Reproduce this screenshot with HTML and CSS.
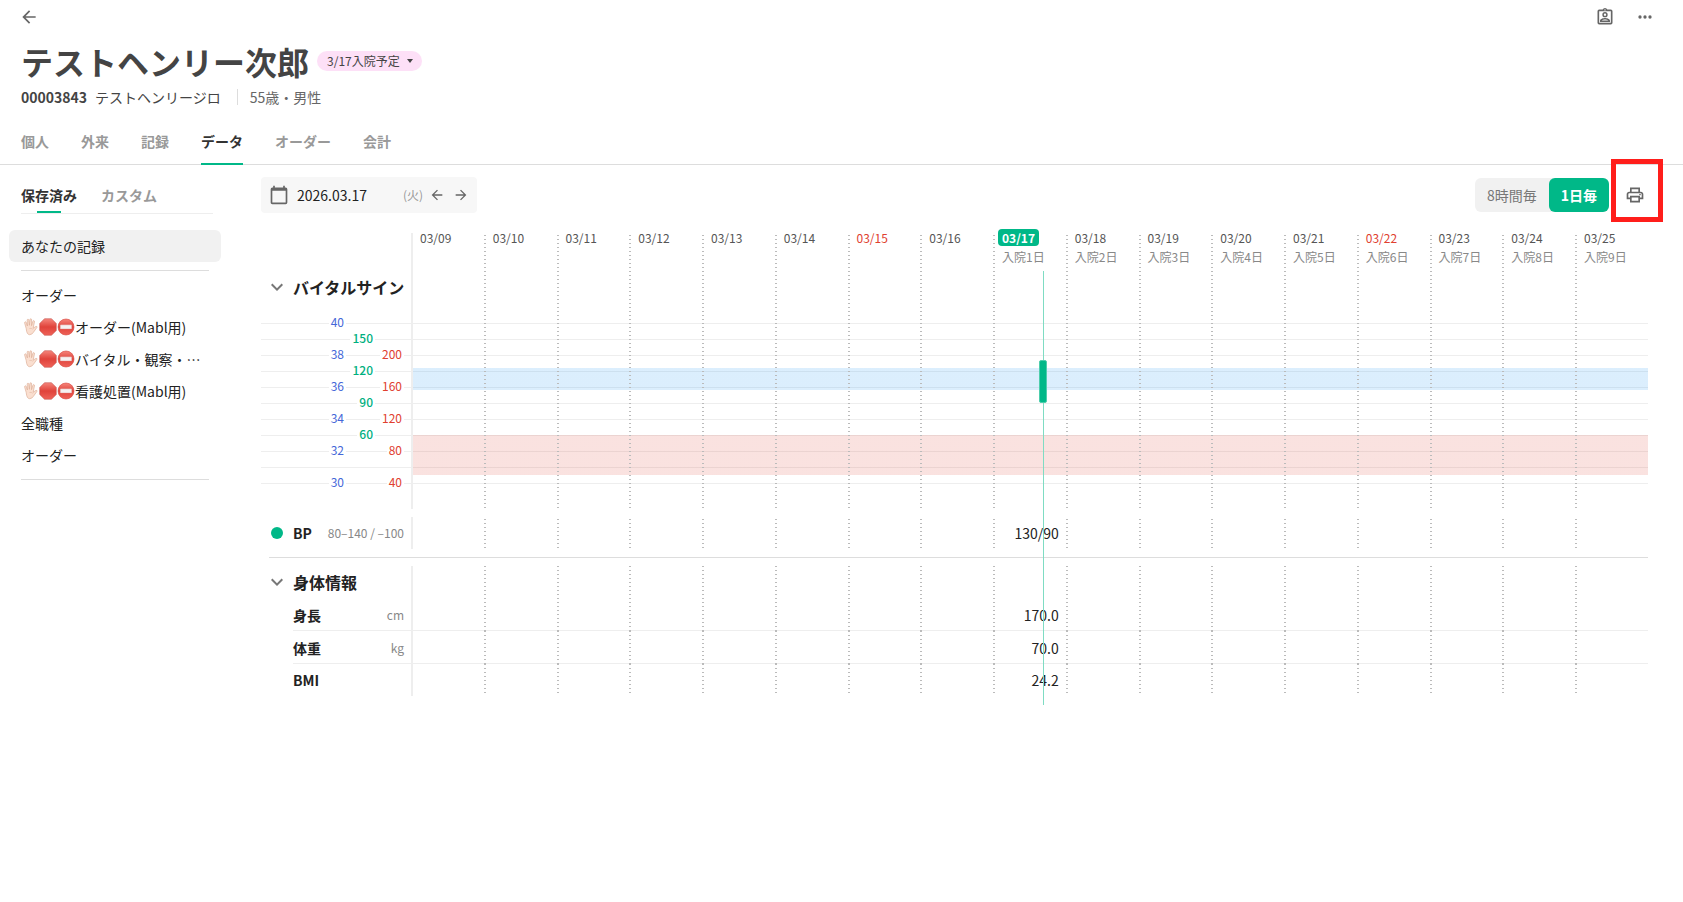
FILE: index.html
```html
<!DOCTYPE html>
<html lang="ja">
<head>
    <meta charset="UTF-8">
    <meta name="viewport" content="width=device-width, initial-scale=1.0">
    <title>テストヘンリー次郎 - データ</title>
    <link rel="stylesheet" href="styles.css">
</head>
<body>
    <svg class="symbols" aria-hidden="true">
        <symbol id="arrow-left" viewBox="0 0 24 24"><path d="M20 11H7.83l5.59-5.59L12 4l-8 8 8 8 1.41-1.41L7.83 13H20z"/></symbol>
        <symbol id="arrow-right" viewBox="0 0 24 24"><path d="M12 4l-1.41 1.41L16.17 11H4v2h12.17l-5.58 5.59L12 20l8-8z"/></symbol>
        <symbol id="chevron" viewBox="0 0 24 24"><path d="M7.41 8.59 12 13.17l4.59-4.58L18 10l-6 6-6-6z"/></symbol>
        <symbol id="hand" viewBox="0 0 18 18">
            <path d="M5.2 10.5 3.7 5.2q-.3-1.2.6-1.4.8-.1 1.1.9l1 3.3L6.2 2.300q0-1.100.8-1.100.800 0 .9 1.100l.5 5 .5-5.600q.1-1 .9-1 .8.1.8 1.100l-.1 5.900 1.300-4.300q.3-1 1.100-.8.8.3.5 1.400l-1.200 6.300 1.900-1.400q1-.8 1.800-.4.6.4-.1 1.100l-3.300 4.600q-1.500 2.500-3.900 2.500-2.900 0-3.400-6.200z" fill="#fadfd0" stroke="#deb09a" stroke-width=".7"/>
            <path d="M8.400 10.500q2-.6 3.300.800" fill="none" stroke="#deb09a" stroke-width=".5"/>
        </symbol>
        <symbol id="stop" viewBox="0 0 18 18"><path d="M5.500.700h7l4.800 4.800v7l-4.800 4.800h-7L.700 12.500v-7z" fill="url(#red)" stroke="#bd4942" stroke-width=".5"/></symbol>
        <symbol id="no-entry" viewBox="0 0 18 18">
            <circle cx="9" cy="9" r="8" fill="url(#red)" stroke="#d8453c" stroke-width=".6"/>
            <rect x="3.200" y="6.800" width="11.600" height="4.200" rx=".6" fill="#f5f2f2" stroke="#d9827c" stroke-width=".4"/>
        </symbol>
        <linearGradient id="red" x1="0" y1="0" x2="0" y2="1"><stop offset="0" stop-color="#f5857b"/><stop offset=".5" stop-color="#e0433b"/><stop offset="1" stop-color="#ee6258"/></linearGradient>
    </svg>

    <header>
        <div class="top-bar">
            <button class="icon-button" aria-label="戻る"><svg><use href="#arrow-left"/></svg></button>
            <div class="top-actions">
                <button class="icon-button" aria-label="患者情報">
                    <svg viewBox="0 0 24 24"><path fill-rule="evenodd" d="M5 3h4.200a3 3 0 0 1 5.600 0H19a2 2 0 0 1 2 2v14a2 2 0 0 1-2 2H5a2 2 0 0 1-2-2V5a2 2 0 0 1 2-2zm0 2v14h14V5zm7-2.300a.8.8 0 1 0 0 1.600.8.8 0 0 0 0-1.600zM12 6a3.200 3.200 0 1 1 0 6.400A3.200 3.200 0 0 1 12 6zm0 1.800a1.400 1.400 0 1 0 0 2.800 1.400 1.400 0 0 0 0-2.800zM6 18v-1.500c0-2.200 4-3.200 6-3.200s6 1 6 3.200V18zm2.300-1.800h7.400c-.7-.6-2.400-1.100-3.700-1.100s-3 .5-3.700 1.100z"/></svg>
                </button>
                <button class="icon-button" aria-label="メニュー">
                    <svg viewBox="0 0 24 24"><circle cx="6" cy="12" r="2"/><circle cx="12" cy="12" r="2"/><circle cx="18" cy="12" r="2"/></svg>
                </button>
            </div>
        </div>
        <div class="patient">
            <h1>テストヘンリー次郎</h1>
            <div class="status">
                <select aria-label="入院状況"><option>3/17入院予定</option></select>
                <span class="caret"></span>
            </div>
        </div>
        <div class="patient-info">
            <b>00003843</b>
            <span>テストヘンリージロ</span>
            <span class="age">55歳・男性</span>
        </div>
        <nav class="tabs">
            <a href="#">個人</a>
            <a href="#">外来</a>
            <a href="#">記録</a>
            <a href="#" class="active">データ</a>
            <a href="#">オーダー</a>
            <a href="#">会計</a>
        </nav>
    </header>

    <div class="content">
        <aside>
            <div class="side-tabs">
                <a href="#" class="active">保存済み</a>
                <a href="#">カスタム</a>
            </div>
            <a href="#" class="item selected">あなたの記録</a>
            <hr>
            <a href="#" class="item">オーダー</a>
            <a href="#" class="item"><svg><use href="#hand"/></svg><svg><use href="#stop"/></svg><svg><use href="#no-entry"/></svg>オーダー(Mabl用)</a>
            <a href="#" class="item"><svg><use href="#hand"/></svg><svg><use href="#stop"/></svg><svg><use href="#no-entry"/></svg>バイタル・観察・…</a>
            <a href="#" class="item"><svg><use href="#hand"/></svg><svg><use href="#stop"/></svg><svg><use href="#no-entry"/></svg>看護処置(Mabl用)</a>
            <a href="#" class="item">全職種</a>
            <a href="#" class="item">オーダー</a>
            <hr>
        </aside>

        <main>
            <div class="toolbar">
                <div class="date-box">
                    <svg viewBox="0 0 24 24"><path fill-rule="evenodd" d="M20 3h-1V1h-2v2H7V1H5v2H4a2 2 0 0 0-2 2v16c0 1.100.9 2 2 2h16a2 2 0 0 0 2-2V5a2 2 0 0 0-2-2zm0 18H4V7h16z"/></svg>
                    <input type="text" value="2026.03.17" aria-label="日付">
                    <span>(火)</span>
                    <button class="icon-button" aria-label="前日"><svg><use href="#arrow-left"/></svg></button>
                    <button class="icon-button" aria-label="翌日"><svg><use href="#arrow-right"/></svg></button>
                </div>
                <div class="toolbar-right">
                    <div class="switch">
                        <button>8時間毎</button>
                        <button class="active">1日毎</button>
                    </div>
                    <div class="print">
                        <button class="icon-button" aria-label="印刷">
                            <svg viewBox="0 0 24 24"><path d="M19 8h-1V3H6v5H5c-1.660 0-3 1.340-3 3v6h4v4h12v-4h4v-6c0-1.660-1.340-3-3-3zM8 5h8v3H8V5zm8 12v2H8v-4h8v2zm2-2v-2H6v2H4v-4c0-.550.450-1 1-1h14c.550 0 1 .450 1 1v4h-2z"/><circle cx="18" cy="11.500" r="1"/></svg>
                        </button>
                    </div>
                </div>
            </div>

            <div class="chart">
                <table>
                    <thead>
                        <tr class="dates">
                            <th class="label"></th>
                            <th>03/09</th>
                            <th>03/10</th>
                            <th>03/11</th>
                            <th>03/12</th>
                            <th>03/13</th>
                            <th>03/14</th>
                            <th class="holiday">03/15</th>
                            <th>03/16</th>
                            <th class="today"><b>03/17</b><small>入院1日</small></th>
                            <th>03/18<small>入院2日</small></th>
                            <th>03/19<small>入院3日</small></th>
                            <th>03/20<small>入院4日</small></th>
                            <th>03/21<small>入院5日</small></th>
                            <th class="holiday">03/22<small>入院6日</small></th>
                            <th>03/23<small>入院7日</small></th>
                            <th>03/24<small>入院8日</small></th>
                            <th>03/25<small>入院9日</small></th>
                        </tr>
                    </thead>
                    <tbody>
                        <tr class="vital-title">
                            <th class="label"><div class="title"><svg><use href="#chevron"/></svg>バイタルサイン</div></th>
                            <td></td><td></td><td></td><td></td><td></td><td></td><td></td><td></td><td></td><td></td><td></td><td></td><td></td><td></td><td></td><td></td><td></td>
                        </tr>
                        <tr class="graph">
                            <th class="label">
                                <div class="axes">
                                    <div class="axis temp"><span>40</span><span>38</span><span>36</span><span>34</span><span>32</span><span>30</span></div>
                                    <div class="axis pulse"><span>150</span><span>120</span><span>90</span><span>60</span></div>
                                    <div class="axis pressure"><span>200</span><span>160</span><span>120</span><span>80</span><span>40</span></div>
                                </div>
                            </th>
                            <td></td><td></td><td></td><td></td><td></td><td></td><td></td><td></td><td></td><td></td><td></td><td></td><td></td><td></td><td></td><td></td><td></td>
                        </tr>
                        <tr class="gap"><td colspan="18"></td></tr>
                        <tr class="bp">
                            <th class="label"><div class="name"><i class="dot"></i>BP<small>80–140 / –100</small></div></th>
                            <td></td><td></td><td></td><td></td><td></td><td></td><td></td><td></td><td>130/90</td><td></td><td></td><td></td><td></td><td></td><td></td><td></td><td></td>
                        </tr>
                        <tr class="divider"><td colspan="18"><hr></td></tr>
                    </tbody>
                    <tbody class="body-info">
                        <tr class="body-title">
                            <th class="label"><div class="title"><svg><use href="#chevron"/></svg>身体情報</div></th>
                            <td></td><td></td><td></td><td></td><td></td><td></td><td></td><td></td><td></td><td></td><td></td><td></td><td></td><td></td><td></td><td></td><td></td>
                        </tr>
                        <tr class="line">
                            <th class="label"><div class="name">身長<small>cm</small></div></th>
                            <td></td><td></td><td></td><td></td><td></td><td></td><td></td><td></td><td>170.0</td><td></td><td></td><td></td><td></td><td></td><td></td><td></td><td></td>
                        </tr>
                        <tr class="line">
                            <th class="label"><div class="name">体重<small>kg</small></div></th>
                            <td></td><td></td><td></td><td></td><td></td><td></td><td></td><td></td><td>70.0</td><td></td><td></td><td></td><td></td><td></td><td></td><td></td><td></td>
                        </tr>
                        <tr>
                            <th class="label"><div class="name">BMI</div></th>
                            <td></td><td></td><td></td><td></td><td></td><td></td><td></td><td></td><td>24.2</td><td></td><td></td><td></td><td></td><td></td><td></td><td></td><td></td>
                        </tr>
                    </tbody>
                </table>
                <div class="overlay">
                    <div class="now"></div>
                    <div class="range"></div>
                </div>
            </div>
        </main>
    </div>
</body>
</html>
```
FILE: styles.css
```css
* {
    box-sizing: border-box;
}
body {
    margin: 0;
    font-family: "Noto Sans CJK JP", sans-serif;
    font-size: 14px;
    line-height: 20px;
    color: #222;
    background-color: white;
}
a {
    color: inherit;
    text-decoration: none;
}
button, input, select {
    font: inherit;
    color: inherit;
    border: none;
    padding: 0;
    background: none;
}
.symbols {
    position: absolute;
    width: 0;
    height: 0;
}
.icon-button {
    display: flex;
    fill: #666;
    cursor: pointer;
}
.icon-button svg {
    width: 20px;
    height: 20px;
}

/* header */
header {
    border-bottom: 1px solid #ddd;
    padding: 7px 28px 0px 21px;
}
.top-bar {
    display: flex;
    justify-content: space-between;
}
.top-bar > .icon-button {
    margin-left: -2px;
}
.top-actions {
    display: flex;
    gap: 20px;
}
.patient {
    display: flex;
    align-items: center;
    gap: 8px;
    margin-top: 10px;
}
h1 {
    margin: 0;
    font-size: 32px;
    line-height: 48px;
    color: #444;
}
.status {
    display: flex;
    align-items: center;
    height: 20px;
    padding: 0px 9px 0px 10px;
    border-radius: 10px;
    background-color: #fde0f7;
    color: #444;
    font-size: 12px;
}
.status select {
    appearance: none;
    height: 20px;
}
.caret {
    margin-left: 7px;
    border: 3px solid transparent;
    border-top: 4px solid #444;
    border-bottom: 0;
}
.patient-info {
    display: flex;
    align-items: center;
    gap: 8px;
    margin-top: 2px;
    color: #444;
}
.age {
    margin-left: 8px;
    border-left: 1px solid #ddd;
    padding-left: 12px;
    color: #666;
    line-height: 16px;
}
.tabs {
    display: flex;
    gap: 32px;
    margin-top: 24px;
    font-weight: bold;
    color: #999;
}
.tabs a {
    height: 34px;
    margin-bottom: -1px;
}
.tabs .active {
    color: #333;
    border-bottom: 2px solid #00b888;
}

/* sidebar */
.content {
    display: flex;
}
aside {
    width: 261px;
    flex-shrink: 0;
    padding: 20px 40px 0px 9px;
}
.side-tabs {
    display: flex;
    gap: 24px;
    height: 29px;
    margin: 0px 8px 16px 12px;
    border-bottom: 1px solid #eee;
    font-weight: bold;
    color: #999;
}
.side-tabs .active {
    color: #333;
}
.side-tabs .active::after {
    content: "";
    display: block;
    width: 24px;
    height: 2px;
    margin: 6px auto 0px;
    background-color: #00b888;
}
.item {
    display: flex;
    align-items: center;
    height: 32px;
    padding-left: 12px;
    border-radius: 6px;
    white-space: nowrap;
}
.item svg {
    width: 18px;
    height: 18px;
}
.selected {
    background-color: #f1f1f1;
}
aside hr {
    border: none;
    border-top: 1px solid #ddd;
    margin: 8px 12px;
}

/* toolbar */
main {
    flex: 1;
    padding: 12px 35px 0px 0px;
}
.toolbar {
    display: flex;
    justify-content: space-between;
    align-items: center;
    height: 36px;
}
.date-box {
    display: flex;
    align-items: center;
    width: 216px;
    height: 36px;
    padding: 0px 4px 0px 6px;
    border-radius: 4px;
    background-color: #f7f7f7;
}
.date-box > svg {
    width: 24px;
    height: 20px;
    fill: #666;
    flex-shrink: 0;
}
.date-box input {
    width: 112px;
    padding-left: 6px;
}
.date-box span {
    color: #999;
    font-size: 12px;
    width: 22px;
}
.date-box .icon-button {
    width: 24px;
    justify-content: center;
}
.date-box .icon-button svg {
    width: 16px;
    height: 16px;
}
.toolbar-right {
    display: flex;
    align-items: center;
}
.switch {
    display: flex;
    height: 34px;
    border-radius: 6px;
    background-color: #f1f1f1;
    color: #777;
}
.switch button {
    padding: 0px 12px;
}
.switch .active {
    border-radius: 6px;
    background-color: #00b888;
    color: white;
    font-weight: bold;
}
.print {
    position: relative;
    padding: 8px 3px 8px 16px;
}
/* highlight frame round the print button */
.print::after {
    content: "";
    position: absolute;
    box-sizing: border-box;
    top: -18px;
    left: 2px;
    width: 52px;
    height: 63px;
    border: 5px solid #ff1e1b;
    pointer-events: none;
}

/* chart */
.chart {
    position: relative;
    margin-top: 16px;
    padding-bottom: 9px;
}
table {
    width: 100%;
    table-layout: fixed;
    border-spacing: 0;
}
th, td {
    padding: 0;
    font-weight: normal;
}
.label {
    width: 150px;
    text-align: left;
}
.label ~ td, .label ~ th {
    background: linear-gradient(#bbb 1px, transparent 1px) 0px 2px / 2px 4px repeat-y;
}
.label + td, .label + th {
    background: linear-gradient(#eee, #eee) 0px 0px / 2px 100% no-repeat;
}
.label ~ td {
    padding-right: 7px;
    text-align: right;
}
.dates {
    height: 44px;
    font-size: 12px;
    color: #555;
}
.dates .label ~ th {
    text-align: left;
    vertical-align: top;
    padding-left: 9px;
    border-top: 4px solid transparent;
    background-clip: padding-box;
    line-height: 10px;
    white-space: nowrap;
}
.dates small {
    display: block;
    margin-top: 8px;
    font-size: 12px;
    line-height: 12px;
    color: #888;
}
.dates .holiday {
    color: #e0402f;
}
.today b {
    display: inline-block;
    margin: -4px 0px -3px -4px;
    padding: 0px 4px;
    border-radius: 4px;
    line-height: 17px;
    background-color: #00b888;
    color: white;
}
.vital-title {
    height: 40px;
    vertical-align: top;
}
.title {
    display: flex;
    align-items: center;
    gap: 4px;
    height: 28px;
    padding-left: 4px;
    font-size: 16px;
    font-weight: bold;
    white-space: nowrap;
}
.title svg {
    width: 24px;
    height: 24px;
    fill: #777;
}
.graph {
    height: 196px;
    vertical-align: top;
    background: repeating-linear-gradient(transparent 0px 10px, #eee 10px 11px, transparent 11px 16px) 0px 0px / 100% 176px no-repeat;
}
.graph td {
    background: linear-gradient(#bbb 1px, transparent 1px) 0px 2px / 2px 4px repeat-y,
        linear-gradient(rgba(33, 150, 243, 0.16), rgba(33, 150, 243, 0.16)) 0px 55px / 100% 22px no-repeat,
        linear-gradient(rgba(220, 60, 45, 0.15), rgba(220, 60, 45, 0.15)) 0px 122px / 100% 40px no-repeat;
}
.graph .label + td {
    background: linear-gradient(#eee, #eee) 0px 0px / 2px 100% no-repeat,
        linear-gradient(rgba(33, 150, 243, 0.16), rgba(33, 150, 243, 0.16)) 0px 55px / 100% 22px no-repeat,
        linear-gradient(rgba(220, 60, 45, 0.15), rgba(220, 60, 45, 0.15)) 0px 122px / 100% 40px no-repeat;
}
.axes {
    display: flex;
    justify-content: flex-end;
    padding: 1px 7px 0px 0px;
    font-size: 12px;
    line-height: 16px;
}
.axis {
    display: flex;
    flex-direction: column;
    align-items: flex-end;
    gap: 16px;
    width: 29px;
}
.axis span {
    padding: 0px 2px;
    background-color: white;
}
.temp {
    color: #4567d8;
}
.pulse {
    padding-top: 16px;
    color: #00b07f;
    font-weight: 500;
}
.pressure {
    padding-top: 32px;
    color: #e0402f;
}
.gap {
    height: 8px;
}
.bp {
    height: 32px;
}
.name {
    display: flex;
    align-items: center;
    padding: 0px 7px 0px 32px;
    font-weight: bold;
}
.name small {
    margin-left: auto;
    font-size: 12px;
    font-weight: normal;
    color: #888;
}
.dot {
    width: 12px;
    height: 12px;
    margin: 0px 10px 0px -22px;
    border-radius: 50%;
    background-color: #00b888;
}
.divider hr {
    border: none;
    border-top: 1px solid #ddd;
    margin: 8px 0px 8px 8px;
}
.body-info .label ~ td {
    background-position: 0px 0px;
}
.body-info tr {
    height: 32px;
}
.body-info .line {
    height: 33px;
    background: linear-gradient(#eee, #eee) 32px 100% / 100% 1px no-repeat;
}

/* current time and the BP range bar */
.overlay {
    position: absolute;
    top: 42px;
    bottom: 0;
    left: 150px;
    right: 0;
    pointer-events: none;
}
.now {
    position: absolute;
    left: 51.1%;
    width: 1px;
    height: 100%;
    background-color: #7fdcc3;
}
.range {
    position: absolute;
    top: 89px;
    left: 51.1%;
    width: 8px;
    height: 43px;
    margin-left: -4px;
    border: 1px solid #4dcdac;
    border-radius: 2px;
    background-color: #00b888;
}
```
